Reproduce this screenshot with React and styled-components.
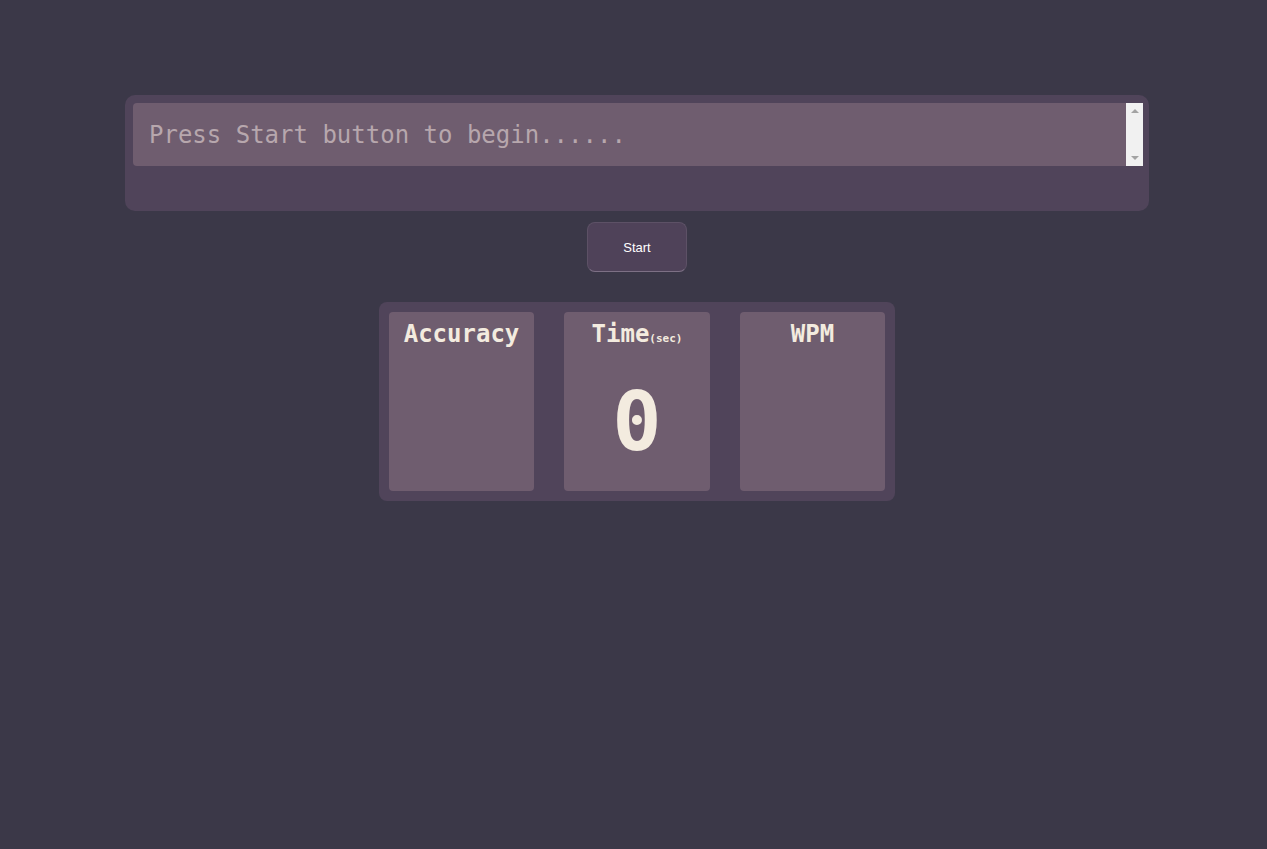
import React from "react";
import styled, { createGlobalStyle } from "styled-components";

const Global = createGlobalStyle`
  html, body { margin: 0; padding: 0; background: #3b3848; }
  body { font-family: "DejaVu Sans Mono", "Liberation Mono", monospace; min-height: 849px; }
`;

const Page = styled.div`
  display: flex;
  flex-direction: column;
  align-items: center;
  padding: 95px 118px 0 125px;
`;

const InputPanel = styled.div`
  box-sizing: border-box;
  width: 100%;
  height: 116px;
  padding: 8px 6px 8px 8px;
  background: #50445a;
  border-radius: 10px;
`;

const InputRow = styled.div`
  display: flex;
  height: 63px;
`;

const TextArea = styled.textarea`
  box-sizing: border-box;
  display: block;
  flex: 1;
  height: 100%;
  margin: 0;
  padding: 14px 16px 10px;
  border: none;
  outline: none;
  resize: none;
  overflow: hidden;
  background: #6f5d6f;
  border-radius: 4px 0 0 4px;
  color: #f3ebdf;
  font-family: "DejaVu Sans Mono", "Liberation Mono", monospace;
  font-size: 24px;
  line-height: 1.5;
  &::placeholder { color: #b7a7ad; }
`;

const ScrollTrack = styled.div`
  width: 17px;
  background: #f1f1f1;
  display: flex;
  flex-direction: column;
  justify-content: space-between;
  align-items: center;
  padding: 6px 0;
  box-sizing: border-box;
`;

const Arrow = styled.span`
  width: 0;
  height: 0;
  border-left: 4px solid transparent;
  border-right: 4px solid transparent;
  ${(p) =>
    p.$down
      ? "border-top: 4px solid #a3a3a3;"
      : "border-bottom: 4px solid #a3a3a3;"}
`;

const StartButton = styled.button`
  margin-top: 11px;
  width: 100px;
  height: 50px;
  background: #4f4259;
  color: #ffffff;
  border: 1px solid #5d5166;
  border-bottom-color: #7d7085;
  border-radius: 8px;
  font-family: "Liberation Sans", Arial, sans-serif;
  font-size: 13px;
  cursor: pointer;
`;

const StatsPanel = styled.div`
  margin-top: 30px;
  display: flex;
  gap: 30px;
  padding: 10px;
  background: #50445a;
  border-radius: 8px;
`;

const Card = styled.div`
  box-sizing: border-box;
  width: ${(p) => p.$w}px;
  height: 179px;
  background: #6f5d6f;
  border-radius: 4px;
  display: flex;
  flex-direction: column;
  align-items: center;
  color: #f3ebdf;
`;

const Title = styled.h2`
  margin: 8px 0 0;
  font-family: "DejaVu Sans Mono", "Liberation Mono", monospace;
  font-size: 24px;
  font-weight: bold;
  line-height: 28px;
`;

const Unit = styled.span`
  font-size: 11px;
`;

const Value = styled.div`
  margin-top: 19px;
  font-family: "DejaVu Sans Mono", "Liberation Mono", monospace;
  font-size: 82px;
  font-weight: bold;
  line-height: 100px;
`;

export default function App() {
  return (
    <>
      <Global />
      <Page>
        <InputPanel>
          <InputRow>
            <TextArea placeholder="Press Start button to begin......" />
            <ScrollTrack>
              <Arrow />
              <Arrow $down />
            </ScrollTrack>
          </InputRow>
        </InputPanel>
        <StartButton>Start</StartButton>
        <StatsPanel>
          <Card $w={145}>
            <Title>Accuracy</Title>
          </Card>
          <Card $w={146}>
            <Title>
              Time<Unit>(sec)</Unit>
            </Title>
            <Value>0</Value>
          </Card>
          <Card $w={145}>
            <Title>WPM</Title>
          </Card>
        </StatsPanel>
      </Page>
    </>
  );
}
